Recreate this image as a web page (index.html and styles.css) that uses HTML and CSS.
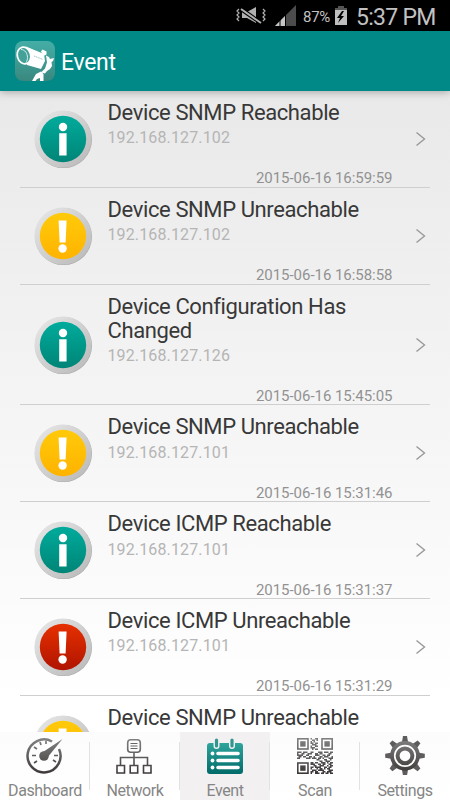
FILE: index.html
```html
<!DOCTYPE html>
<html lang="en">
<head>
<meta charset="utf-8">
<title>Event</title>
<link rel="stylesheet" href="styles.css">
</head>
<body>
<svg class="defs" aria-hidden="true">
  <defs>
    <linearGradient id="ring" x1="0" y1="0" x2="1" y2="1"><stop offset="0" stop-color="#e9e9e9"/><stop offset="1" stop-color="#b7b7b7"/></linearGradient>
    <linearGradient id="teal" x1="0" y1="0" x2="0" y2="1"><stop offset="0" stop-color="#00ab9c"/><stop offset="1" stop-color="#008577"/></linearGradient>
    <linearGradient id="amber" x1="0" y1="0" x2="0" y2="1"><stop offset="0" stop-color="#ffca0a"/><stop offset="1" stop-color="#ffb300"/></linearGradient>
    <linearGradient id="red" x1="0" y1="0" x2="0" y2="1"><stop offset="0" stop-color="#e63000"/><stop offset="1" stop-color="#b01400"/></linearGradient>
    <linearGradient id="ink" gradientUnits="userSpaceOnUse" x1="0" y1="0" x2="0" y2="40"><stop offset="0" stop-color="#888"/><stop offset="1" stop-color="#3a3535"/></linearGradient>
    <linearGradient id="cal" x1="0" y1="0" x2="0" y2="1"><stop offset="0" stop-color="#2fa59c"/><stop offset="1" stop-color="#006b69"/></linearGradient>
    <linearGradient id="app" x1="0" y1="0" x2="0" y2="1"><stop offset="0" stop-color="#45aea6"/><stop offset="1" stop-color="#39887f"/></linearGradient>
    <symbol id="base" viewBox="0 0 60 60"><circle cx="30.5" cy="30.6" r="28.5" fill="#aaa"/><circle cx="30" cy="30" r="28.6" fill="url(#ring)"/></symbol>
    <symbol id="info" viewBox="0 0 60 60"><use href="#base"/><circle cx="30" cy="30" r="23.2" fill="url(#teal)"/><circle cx="30" cy="18" r="4.2" fill="#fff"/><path d="M26.2 24.3h7.4v22.2h-7.4z" fill="#fff"/></symbol>
    <symbol id="mark" viewBox="0 0 60 60"><path d="M25.6 14.5h8l-1 22h-6z" fill="#fff"/><circle cx="29.6" cy="42.5" r="4.2" fill="#fff"/></symbol>
    <symbol id="warn" viewBox="0 0 60 60"><use href="#base"/><circle cx="30" cy="30" r="23.2" fill="url(#amber)"/><use href="#mark"/></symbol>
    <symbol id="error" viewBox="0 0 60 60"><use href="#base"/><circle cx="30" cy="30" r="23.2" fill="url(#red)"/><use href="#mark"/></symbol>
  </defs>
</svg>
<div class="screen">
  <div class="status">
    <svg width="30" height="20" viewBox="0 0 30 20" fill="none" stroke="#b0b0b0"><path d="M3 3l-2 2 2 2-2 2 2 2-2 2 2 2M27 3l2 2-2 2 2 2-2 2 2 2-2 2" stroke-width="1.2"/><path d="M6 6h5l9-5v16l-9-5H6z" fill="#b0b0b0" stroke="none"/><path d="M5 3l20 14" stroke="#000" stroke-width="4"/><path d="M5 3l20 14" stroke-width="2"/></svg>
    <svg class="signal" width="22" height="22" viewBox="0 0 22 22"><path d="M0 21L21 0v21z" fill="#4c4c4c"/><path d="M0 21l10-10V21z" fill="#c8c8c8"/><path d="M5 14v7M10.500 9v12" stroke="#000"/></svg>
    <span class="percent">87%</span>
    <svg class="battery" width="14" height="20" viewBox="0 0 14 20"><path d="M4 0h6v2h3v3H1V2h3z" fill="#555"/><path d="M1 4h12v15H1z" fill="#c0c0c0"/><path d="M8 5l-5 7h3l-2 5 6-7H7l3-5z" fill="#000"/></svg>
    <span class="clock">5:37 PM</span>
  </div>
  <header class="bar">
    <svg width="40" height="40" viewBox="0 0 40 40"><rect width="40" height="40" rx="8" fill="url(#app)"/><g fill="#fff"><path d="M11 5.500L29 13l1 7-4 8-14-4z"/><path d="M26 10.500l1.500-2 4 2v3l-3 1.500z"/><path d="M31 14.500l3 1.500 1 2 4-1-1 3-1.500 1 .5 4-2 3-3 2-2 2.500-4-1 4-4 2-6z"/><path d="M21 33l5-2.500 2.500 2.500v7h-3.500v-3l-3 1-1.500 2h-3.500z"/></g><ellipse cx="9" cy="14.500" rx="7.500" ry="9.300" transform="rotate(-15 9 14.500)" fill="#fff"/><ellipse cx="9" cy="14.500" rx="5.800" ry="7.600" transform="rotate(-15 9 14.500)" fill="#43a198"/><path d="M6 8.500c4 0 6.500 4 6.500 8 0 2-.5 3.500-1.500 5" fill="none" stroke="#d7efec"/><path d="M19 15l9 3.500" fill="none" stroke="#8cc6bf" stroke-dasharray="1.500 .8"/></svg>
    <h1>Event</h1>
  </header>
  <main class="list" id="list"></main>
  <nav class="tabs">
    <div class="tab"><svg width="40" height="40" viewBox="0 0 40 40" fill="none" stroke="url(#ink)"><path d="M27 6.5A16.5 16.5 0 1 0 34 14" stroke-width="2.5"/><path d="M11 20.500H7M12 14l-3-2M16 10l-1-3M21 9V6M29 20.500h4M28 25l3 2M12 26l-3 2" stroke-width="1.700"/><path d="M37.500 4L18 17l4 6z" fill="url(#ink)" stroke="none"/><circle cx="19" cy="21" r="4.800" fill="url(#ink)" stroke="none"/></svg><span>Dashboard</span></div>
    <div class="tab"><svg width="40" height="40" viewBox="0 0 40 40" fill="none" stroke="url(#ink)"><rect x="12.700" y="4.700" width="12.600" height="12.600" rx="3" stroke-width="1.600"/><path d="M15.500 8.500h7M15.500 11h7M15.500 13.500h7" stroke="#666" stroke-width="1.200"/><path d="M19 17.500V30M5.500 30v-7.500h27V30" stroke-width="1.600"/><path d="M2 30.500h7.500v7.500H2zM15.200 30.500h7.500v7.500h-7.500zM28.500 30.500H36v7.500h-7.500z" stroke-width="1.600"/></svg><span>Network</span></div>
    <div class="tab active"><svg width="40" height="40" viewBox="0 0 40 40"><rect x="2" y="8" width="36" height="31" rx="3" fill="url(#cal)"/><path d="M11.500 5v6M27 5v6" stroke="#f2f0f1" stroke-width="6" stroke-linecap="round"/><path d="M11.500 5v6M27 5v6" stroke="#31968f" stroke-width="3.200" stroke-linecap="round"/><path d="M13 18.500h20M13 25.500h20M13 32.500h20" stroke="#fff" stroke-width="3.600" stroke-linecap="round"/><g fill="#fff"><circle cx="7.500" cy="18.500" r="1.900"/><circle cx="7.500" cy="25.500" r="1.900"/><circle cx="7.500" cy="32.500" r="1.900"/></g></svg><span>Event</span></div>
    <div class="tab"><svg width="40" height="40" viewBox="0 0 40 40" id="qr"></svg><span>Scan</span></div>
    <div class="tab"><svg width="40" height="40" viewBox="0 0 40 40" id="gear"></svg><span>Settings</span></div>
  </nav>
</div>
<script src="app.js"></script>
</body>
</html>
```
FILE: app.js
```js
const events = [
  ['info', 'Device SNMP Reachable', '192.168.127.102', '2015-06-16 16:59:59'],
  ['warn', 'Device SNMP Unreachable', '192.168.127.102', '2015-06-16 16:58:58'],
  ['info', 'Device Configuration Has Changed', '192.168.127.126', '2015-06-16 15:45:05'],
  ['warn', 'Device SNMP Unreachable', '192.168.127.101', '2015-06-16 15:31:46'],
  ['info', 'Device ICMP Reachable', '192.168.127.101', '2015-06-16 15:31:37'],
  ['error', 'Device ICMP Unreachable', '192.168.127.101', '2015-06-16 15:31:29'],
  ['warn', 'Device SNMP Unreachable', '', '']
];
document.getElementById('list').innerHTML = events.map(([kind, title, ip, time]) => `
  <article class="row">
    <svg class="kind" viewBox="0 0 60 60"><use href="#${kind}"/></svg>
    <div class="text"><h2>${title}</h2><p class="ip">${ip}</p><time>${time}</time></div>
    <svg class="chevron" width="12" height="16" viewBox="0 0 12 16"><path d="M1.500 1.500L9.500 8l-8 6.500"/></svg>
  </article>`).join('');

// QR modules between the three finder squares
const rows = [
  '000000000100110000000000', '000000000011010000000000', '000000000101000000000000',
  '000000000110110000000000', '000000000011100000000000', '000000000100110000000000',
  '000000000111000000000000', '000000000010110000000000', '000000000000000000000000',
  '111011100110001110111011', '100110011100110110000110', '111100110000111001101100',
  '011011001101000110111001', '110000111011101101000111', '000000000000011000110010',
  '000000000000000110011100', '000000000110110011101011', '000000000111001101100110',
  '000000000001100111001011', '000000000110111100110110', '000000000100010110101100',
  '000000000011101111000111', '000000000110110001101110', '000000000100111011011011'
];
const size = 36 / 24;
let path = '';
rows.forEach((row, y) => [...row].forEach((bit, x) => {
  if (bit === '1') path += `M${2 + x * size} ${3 + y * size}h${size}v${size}h${-size}z`;
}));
const finder = (x, y) => `<rect x="${x + .8}" y="${y + .8}" width="10.200" height="10.200" fill="none" stroke="url(#ink)" stroke-width="1.600"/><rect x="${x + 3.200}" y="${y + 3.200}" width="5.400" height="5.400" fill="url(#ink)"/>`;
document.getElementById('qr').innerHTML = `<path d="${path}" fill="url(#ink)"/>` + finder(2, 3) + finder(26.2, 3) + finder(2, 27.2);

const teeth = Array.from({ length: 8 }, (_, i) => `<path d="M16.800 8l1.200-7h4l1.200 7z" transform="rotate(${i * 45} 20 20.800)" fill="#5e5c5c"/>`).join('');
document.getElementById('gear').innerHTML = teeth + '<circle cx="20" cy="20.800" r="13" fill="none" stroke="url(#ink)" stroke-width="3.800"/><circle cx="20" cy="20.800" r="7.400" fill="none" stroke="url(#ink)" stroke-width="4"/>';
```
FILE: styles.css
```css
* { box-sizing: border-box; }
body { margin: 0; font-family: Roboto, "Liberation Sans", sans-serif; }
h1, h2, p { margin: 0; font-weight: 400; }
.defs { position: absolute; width: 0; height: 0; }
.screen { display: flex; flex-direction: column; width: 450px; height: 800px; overflow: hidden; background: linear-gradient(#e9e9e9 91px, #fff 700px); }
.status { display: flex; align-items: center; flex: 0 0 31px; background: #000; color: #c2c2c2; padding-left: 236px; }
.signal { margin-left: 9px; }
.percent { margin-left: 6px; width: 30px; font-size: 15px; letter-spacing: -.3px; padding-top: 2px; }
.battery { margin-left: 1px; }
.clock { margin-left: 8px; padding-top: 3px; font-size: 23px; letter-spacing: -.7px; white-space: nowrap; }
.bar { display: flex; align-items: center; flex: 0 0 60px; padding-left: 15px; gap: 6px; background: #008986; color: #fff; box-shadow: 0 1px 8px rgba(0,0,0,.3); z-index: 1; }
.bar h1 { font-size: 23px; letter-spacing: -.3px; padding-top: 2px; }
.list { flex: 1 1 0; min-height: 0; overflow: hidden; }
.row { display: flex; align-items: center; min-height: 96.8px; margin: 0 20px; border-bottom: 1px solid #cfcfcf; }
.kind { flex: 0 0 60px; height: 60px; margin-left: 13px; }
.text { display: flex; flex-direction: column; width: 285px; margin-left: 14.5px; align-self: stretch; padding-top: 10px; }
.text h2 { font-size: 22px; line-height: 24.4px; letter-spacing: -.39px; width: 270px; color: #383838; }
.ip { height: 20px; margin-top: 3px; font-size: 16px; line-height: 20px; letter-spacing: .13px; color: #b5b5b5; }
time { height: 18px; margin-top: 20px; font-size: 15px; line-height: 20px; letter-spacing: -.04px; color: #929292; text-align: right; }
.chevron { margin-left: 22px; fill: none; stroke: #999; stroke-width: 1.4; }
.tabs { display: flex; flex: 0 0 68px; background: linear-gradient(#fcfcfc, #fff); }
.tab { flex: 1 1 0; position: relative; display: flex; flex-direction: column; align-items: center; color: #858585; padding-top: 3px; }
.tab svg { flex: 0 0 40px; }
.tab span { font-size: 16px; line-height: 18px; margin-top: 7px; letter-spacing: -.4px; }
.tab + .tab::before { content: ""; position: absolute; left: -1px; top: 10px; width: 1px; height: 48px; background: #e2e2e2; }
.active { background: #f2f0f1; }
```
